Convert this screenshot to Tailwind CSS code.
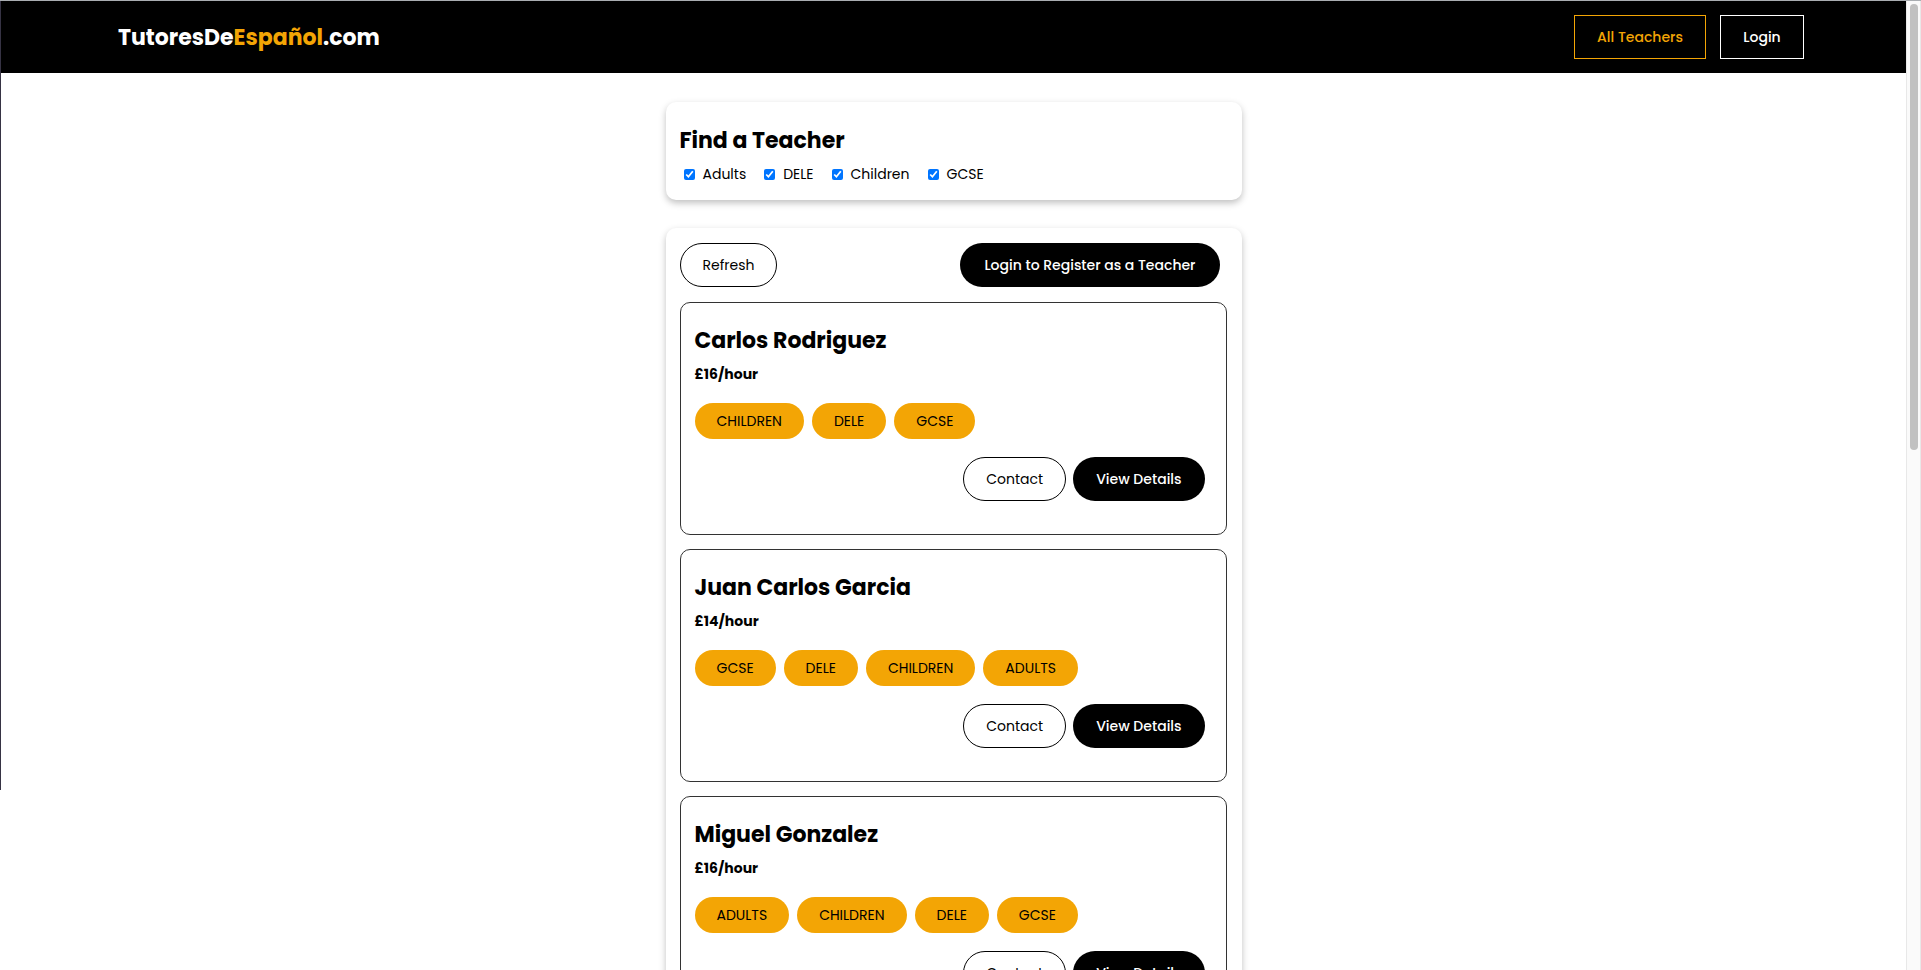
<!DOCTYPE html>
<html lang="en">
<head>
<meta charset="utf-8">
<meta name="viewport" content="width=device-width, initial-scale=1">
<title>TutoresDeEspañol.com</title>
<script src="https://cdn.jsdelivr.net/npm/@tailwindcss/browser@4"></script>
</head>
<body class="relative flex h-screen overflow-hidden border-t border-[#a9adb1] bg-white font-['Poppins','Inter',sans-serif] text-[14px] text-black">
<div class="absolute left-0 top-0 h-[789px] w-px bg-[#363344]"></div>
<div class="min-w-0 flex-1 overflow-hidden pl-px">
  <header class="flex h-[72px] items-center justify-between bg-black pl-[117px] pr-[102px] text-white">
    <a href="#" class="text-[22px] font-bold">TutoresDe<span class="text-[#f3a505]">Español</span>.com</a>
    <nav class="flex gap-[14px] font-medium">
      <a href="#" class="flex h-11 w-[132px] items-center justify-center border border-[#f3a505] text-[#f3a505]">All Teachers</a>
      <a href="#" class="flex h-11 w-[84px] items-center justify-center border border-white">Login</a>
    </nav>
  </header>
  <main class="mx-auto mt-[29px] flex w-full max-w-[576px] flex-col gap-7">
    <section class="rounded-[10px] px-[14px] pb-[15px] pt-[21px] shadow-[0_3px_7px_rgba(0,0,0,0.25)]">
      <h1 class="text-[22px] font-bold leading-[36px]">Find a Teacher</h1>
      <form class="flex gap-[18px] pl-1 pt-[5px] leading-[21px]">
        <label class="flex items-center gap-2"><input type="checkbox" checked class="size-[11px] accent-[#0075ff]">Adults</label>
        <label class="flex items-center gap-2"><input type="checkbox" checked class="size-[11px] accent-[#0075ff]">DELE</label>
        <label class="flex items-center gap-2"><input type="checkbox" checked class="size-[11px] accent-[#0075ff]">Children</label>
        <label class="flex items-center gap-2"><input type="checkbox" checked class="size-[11px] accent-[#0075ff]">GCSE</label>
      </form>
    </section>
    <section class="flex flex-col gap-[15px] rounded-[10px] px-[14px] py-[15px] shadow-[0_3px_7px_rgba(0,0,0,0.25)]">
      <div class="flex justify-between pr-2">
        <button type="button" class="h-11 rounded-[22px] border border-black px-[22px]">Refresh</button>
        <button type="button" class="h-11 rounded-[22px] bg-black px-6 font-medium text-white">Login to Register as a Teacher</button>
      </div>
      <div class="flex flex-col gap-[14px]">
        <article class="mr-px rounded-[10px] border border-[#333] px-[14px] pb-[33px] pt-5">
          <h2 class="text-[22px] font-bold leading-[36px]">Carlos Rodriguez</h2>
          <p class="mt-1 font-bold leading-[22px]">£16/hour</p>
          <ul class="mt-[18px] flex gap-2 leading-[36px]">
            <li class="rounded-[18px] bg-[#f3a505] px-[22px]">CHILDREN</li>
            <li class="rounded-[18px] bg-[#f3a505] px-[22px]">DELE</li>
            <li class="rounded-[18px] bg-[#f3a505] px-[22px]">GCSE</li>
          </ul>
          <div class="mt-[18px] flex justify-end gap-[7px] pr-[7px]">
            <button type="button" class="h-11 rounded-[22px] border border-black px-[22px]">Contact</button>
            <button type="button" class="h-11 rounded-[22px] bg-black px-[23px] font-medium text-white">View Details</button>
          </div>
        </article>
        <article class="mr-px rounded-[10px] border border-[#333] px-[14px] pb-[33px] pt-5">
          <h2 class="text-[22px] font-bold leading-[36px]">Juan Carlos Garcia</h2>
          <p class="mt-1 font-bold leading-[22px]">£14/hour</p>
          <ul class="mt-[18px] flex gap-2 leading-[36px]">
            <li class="rounded-[18px] bg-[#f3a505] px-[22px]">GCSE</li>
            <li class="rounded-[18px] bg-[#f3a505] px-[22px]">DELE</li>
            <li class="rounded-[18px] bg-[#f3a505] px-[22px]">CHILDREN</li>
            <li class="rounded-[18px] bg-[#f3a505] px-[22px]">ADULTS</li>
          </ul>
          <div class="mt-[18px] flex justify-end gap-[7px] pr-[7px]">
            <button type="button" class="h-11 rounded-[22px] border border-black px-[22px]">Contact</button>
            <button type="button" class="h-11 rounded-[22px] bg-black px-[23px] font-medium text-white">View Details</button>
          </div>
        </article>
        <article class="mr-px rounded-[10px] border border-[#333] px-[14px] pb-[33px] pt-5">
          <h2 class="text-[22px] font-bold leading-[36px]">Miguel Gonzalez</h2>
          <p class="mt-1 font-bold leading-[22px]">£16/hour</p>
          <ul class="mt-[18px] flex gap-2 leading-[36px]">
            <li class="rounded-[18px] bg-[#f3a505] px-[22px]">ADULTS</li>
            <li class="rounded-[18px] bg-[#f3a505] px-[22px]">CHILDREN</li>
            <li class="rounded-[18px] bg-[#f3a505] px-[22px]">DELE</li>
            <li class="rounded-[18px] bg-[#f3a505] px-[22px]">GCSE</li>
          </ul>
          <div class="mt-[18px] flex justify-end gap-[7px] pr-[7px]">
            <button type="button" class="h-11 rounded-[22px] border border-black px-[22px]">Contact</button>
            <button type="button" class="h-11 rounded-[22px] bg-black px-[23px] font-medium text-white">View Details</button>
          </div>
        </article>
      </div>
    </section>
  </main>
</div>
<div class="w-[15px] border-x border-[#e8e8e8] bg-[#fafafa] px-[3px] pt-[3px]">
  <div class="h-[446px] w-2 rounded-full bg-[#c1c1c1]"></div>
</div>
</body>
</html>
